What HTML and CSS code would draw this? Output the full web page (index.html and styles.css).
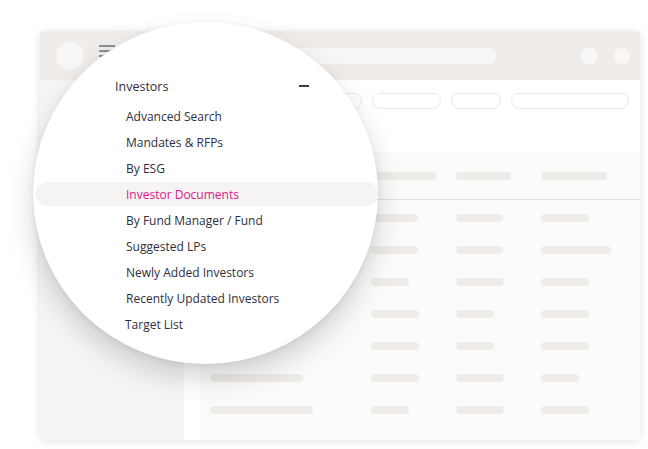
FILE: index.html
```html
<!DOCTYPE html>
<html>
<head>
<meta charset="utf-8">
<link rel="stylesheet" href="styles.css">
</head>
<body>
<div class="stage">
  <div class="window">
    <div class="topbar">
      <div class="avatar"></div>
      <div class="burger"><span></span><span></span><span class="short"></span></div>
      <div class="search"></div>
      <div class="dots"><span></span><span></span></div>
    </div>
    <div class="body">
      <div class="sidebar"></div>
      <div class="main">
        <div class="filters">
          <span class="pill p1"></span><span class="pill p2"></span><span class="pill p3"></span><span class="pill p4"></span>
        </div>
        <div class="card">
          <div class="thead">
            <span class="bar" style="width:120px"></span>
            <span class="bar" style="width:65px"></span>
            <span class="bar" style="width:55px"></span>
            <span class="bar" style="width:66px"></span>
          </div>
          <div class="row"><span class="bar" style="width:120px"></span><span class="bar" style="width:47px"></span><span class="bar" style="width:47px"></span><span class="bar" style="width:48px"></span></div>
          <div class="row"><span class="bar" style="width:120px"></span><span class="bar" style="width:47px"></span><span class="bar" style="width:47px"></span><span class="bar" style="width:70px"></span></div>
          <div class="row"><span class="bar" style="width:120px"></span><span class="bar" style="width:38px"></span><span class="bar" style="width:48px"></span><span class="bar" style="width:48px"></span></div>
          <div class="row"><span class="bar" style="width:60px"></span><span class="bar" style="width:48px"></span><span class="bar" style="width:38px"></span><span class="bar" style="width:48px"></span></div>
          <div class="row"><span class="bar" style="width:60px"></span><span class="bar" style="width:48px"></span><span class="bar" style="width:38px"></span><span class="bar" style="width:48px"></span></div>
          <div class="row"><span class="bar" style="width:93px"></span><span class="bar" style="width:48px"></span><span class="bar" style="width:48px"></span><span class="bar" style="width:38px"></span></div>
          <div class="row"><span class="bar" style="width:103px"></span><span class="bar" style="width:38px"></span><span class="bar" style="width:48px"></span><span class="bar" style="width:48px"></span></div>
        </div>
      </div>
    </div>
  </div>

  <div class="lens">
    <div class="menu">
      <div class="menu-head"><span class="head-label">Investors</span><span class="minus"></span></div>
      <div class="item">Advanced Search</div>
      <div class="item">Mandates &amp; RFPs</div>
      <div class="item">By ESG</div>
      <div class="item active">Investor Documents</div>
      <div class="item">By Fund Manager / Fund</div>
      <div class="item">Suggested LPs</div>
      <div class="item">Newly Added Investors</div>
      <div class="item">Recently Updated Investors</div>
      <div class="item last">Target List</div>
    </div>
  </div>
</div>
</body>
</html>
```

FILE: styles.css
```css
* { box-sizing: border-box; }
html, body { margin: 0; padding: 0; background: #ffffff; }
body { font-family: "Open Sans", "Liberation Sans", sans-serif; width: 648px; height: 449px; overflow: hidden; }

.stage { position: relative; width: 648px; height: 449px; padding: 31px 8px 9px 40px; }

.window {
  width: 600px; height: 409px;
  border-radius: 5px;
  overflow: hidden;
  background: #ffffff;
  box-shadow: 0 1px 8px rgba(0,0,0,0.12);
  display: flex; flex-direction: column;
}

.topbar {
  height: 49px; flex: none;
  background: #f0ece9;
  display: flex; align-items: center;
  padding: 0 10px 0 16px;
}
.avatar { width: 28px; height: 28px; border-radius: 50%; background: #f8f7f6; flex: none; }
.burger { margin-left: 15px; width: 16px; display: flex; flex-direction: column; gap: 3px; margin-top: -9px; flex: none; }
.burger span { display: block; height: 2px; background: #8c8c96; width: 16px; }
.burger span.short { width: 10px; }
.search { flex: 1; height: 16px; border-radius: 8px; background: #f8f6f5; margin-left: 14px; max-width: 382px; margin-right: 85px; }
.dots { display: flex; gap: 17px; margin-left: auto; }
.dots span { width: 16px; height: 16px; border-radius: 50%; background: #f9f8f7; display: block; }

.body { flex: 1; display: flex; min-height: 0; }
.sidebar { width: 144px; flex: none; background: #f6f5f3; }
.main { flex: 1; display: flex; flex-direction: column; padding-left: 16px; }

.filters { height: 72px; flex: none; display: flex; gap: 10px; padding-top: 13px; justify-content: flex-end; padding-right: 11px; }
.pill { display: block; height: 16px; border: 1px solid #ece8e5; border-radius: 8px; }
.p1 { width: 90px; }
.p2 { width: 69px; }
.p3 { width: 50px; }
.p4 { width: 118px; }

.card { flex: 1; background: #fbfbfa; }
.thead, .row {
  display: grid;
  grid-template-columns: 161px 85px 85px 1fr;
  align-items: center;
  padding-left: 10px;
}
.thead { height: 48px; border-bottom: 1px solid #e5e1de; }
.row { height: 32px; }
.thead + .row { margin-top: 2px; }
.bar { display: block; height: 8px; border-radius: 4px; background: #efebe8; }

.lens {
  position: absolute; left: 33px; top: 22px;
  width: 345px; height: 342px;
  border-radius: 50%;
  background: #ffffff;
  overflow: hidden;
  box-shadow: 0 14px 28px rgba(0,0,0,0.17), 0 2px 6px rgba(0,0,0,0.06);
}
.menu { display: flex; flex-direction: column; padding-top: 51px; color: #2f2f3b; }
.menu-head { height: 26px; display: flex; align-items: center; padding-left: 82px; font-size: 12.5px; margin-bottom: 4px; }
.head-label { width: 184px; }
.minus { display: block; width: 10px; height: 1.5px; background: #3a3a48; }
.item { height: 26px; display: flex; align-items: center; padding-left: 93px; font-size: 12px; }
.item.active { height: 24px; margin: 1px 0 1px 3px; width: 342px; border-radius: 12px; background: #f5f4f2; padding-left: 90px; color: #e0168b; }
.item.last { padding-left: 92px; }
```
